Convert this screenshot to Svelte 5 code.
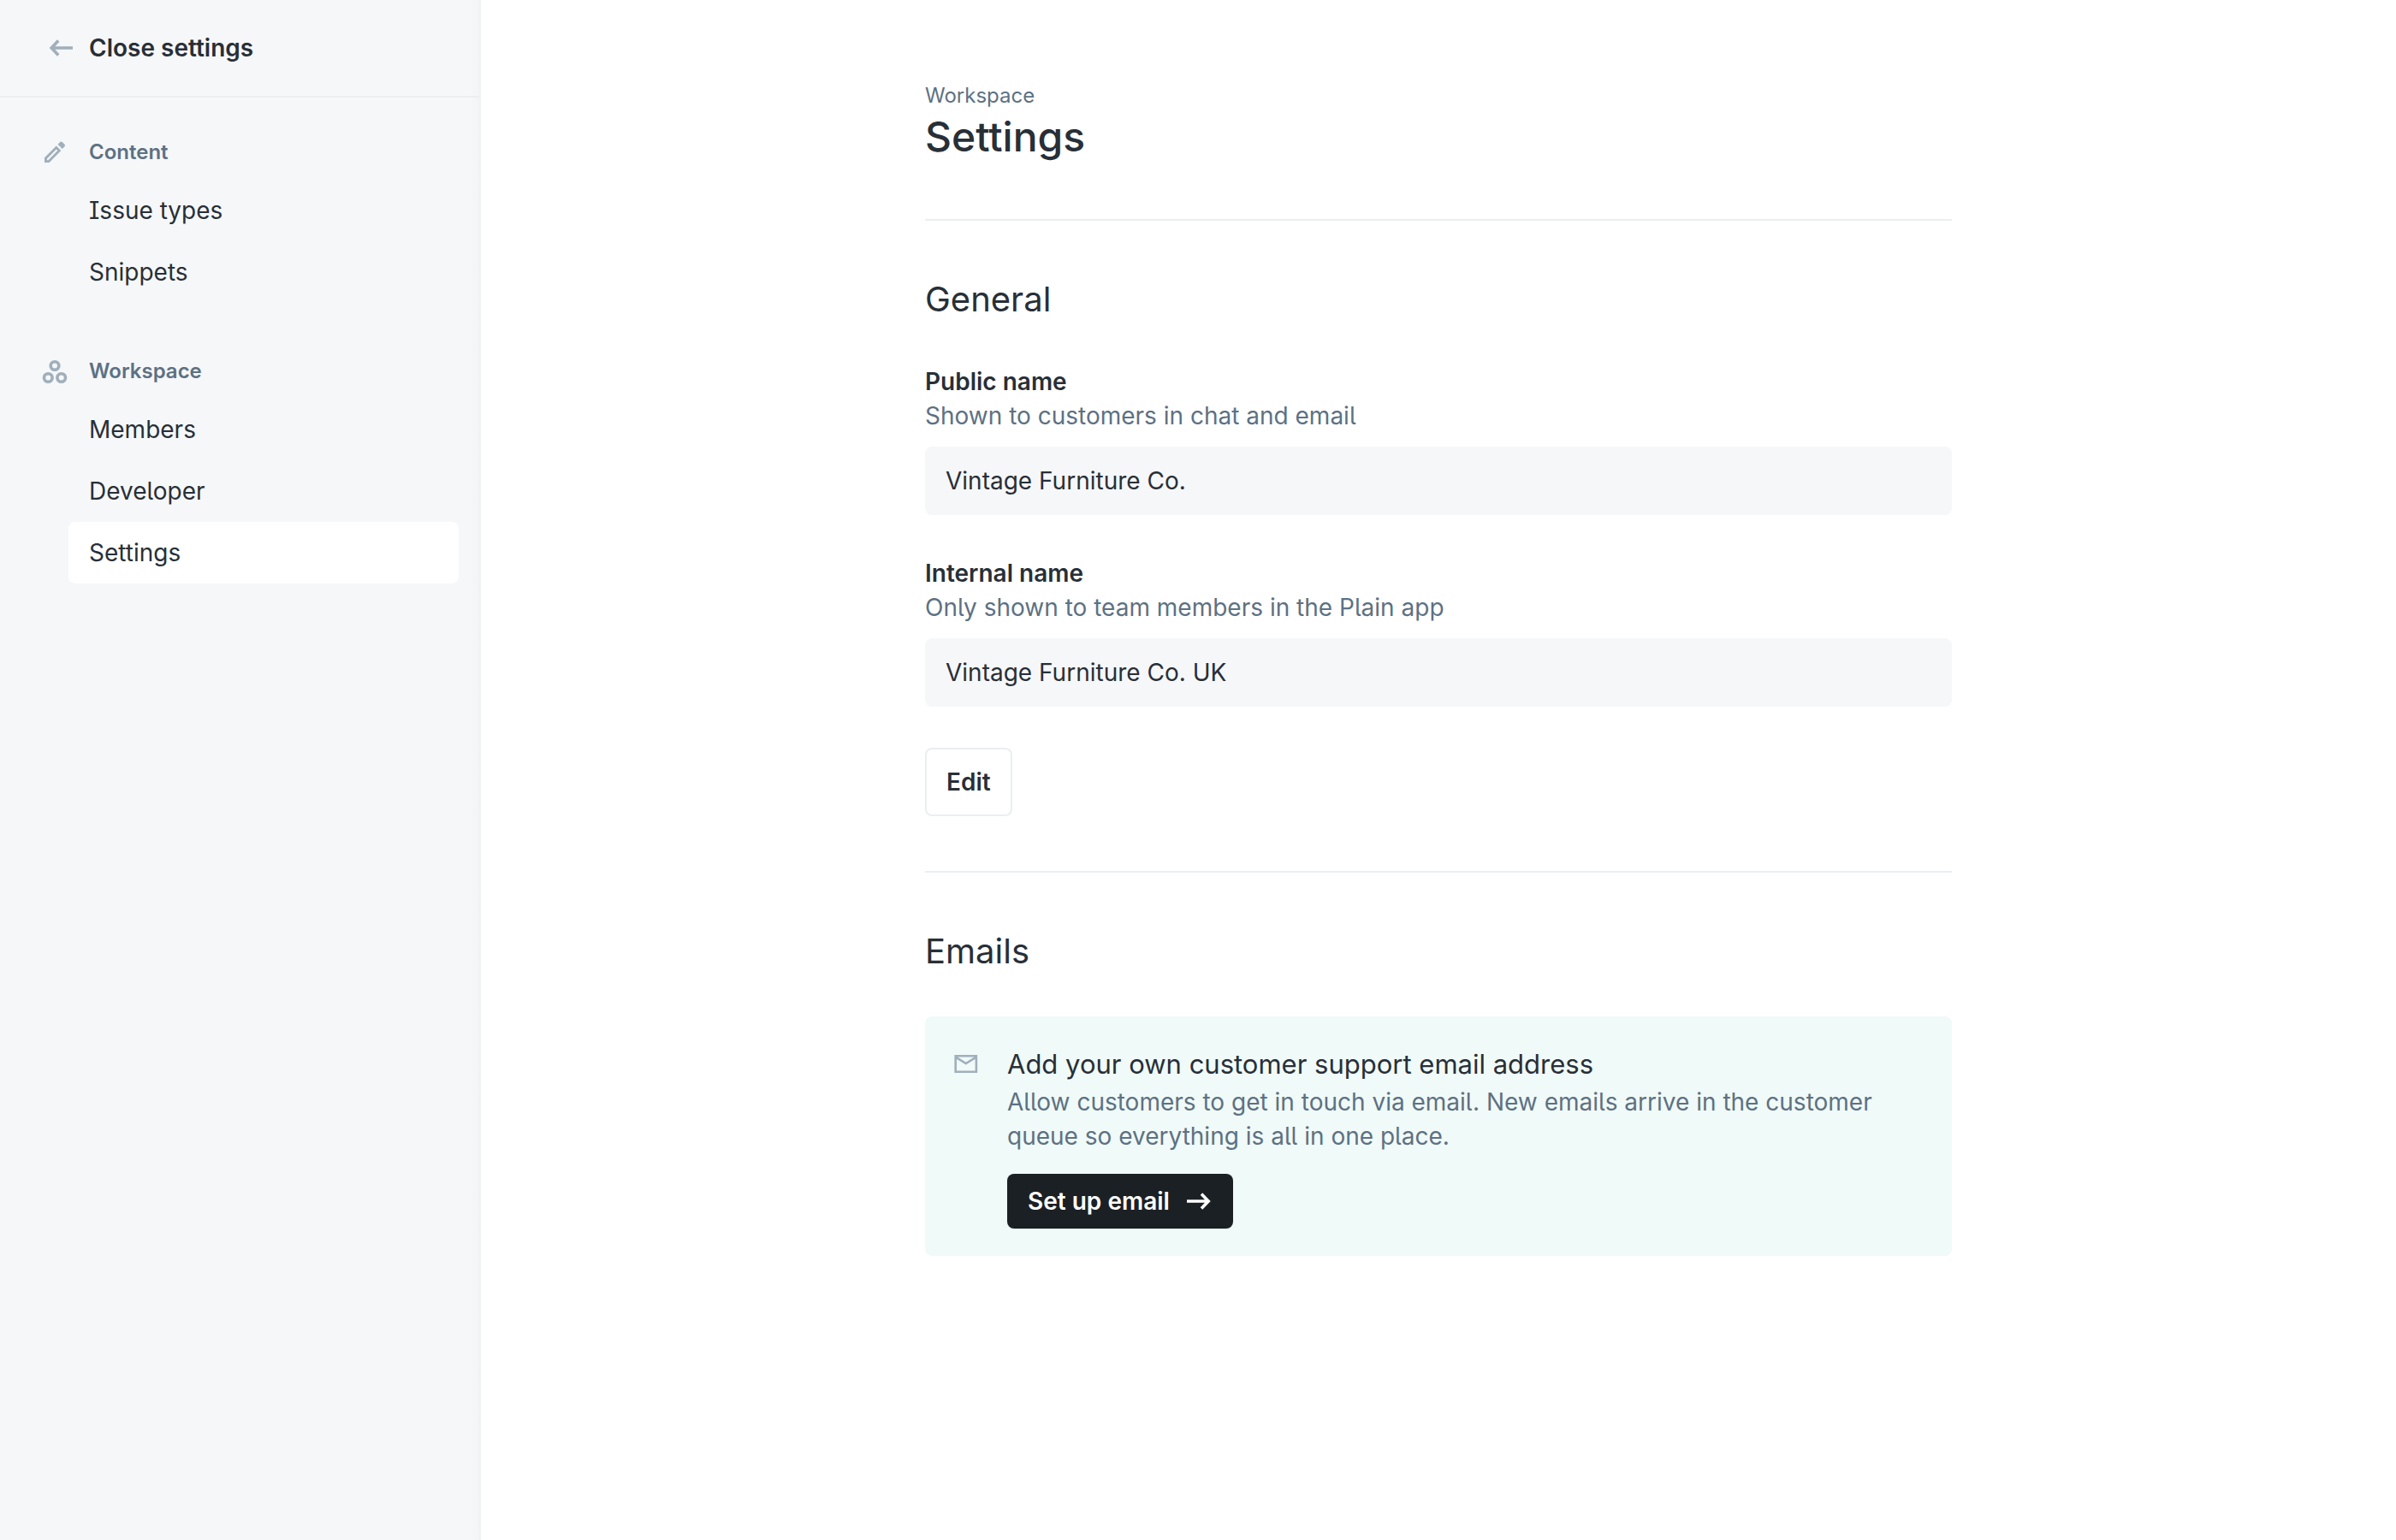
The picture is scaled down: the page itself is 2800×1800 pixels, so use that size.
<script>
  const groups = [
    { title: 'Content', icon: 'pencil', items: ['Issue types', 'Snippets'] },
    { title: 'Workspace', icon: 'circles', items: ['Members', 'Developer', 'Settings'] }
  ];
  const current = 'Settings';

  let publicName = $state('Vintage Furniture Co.');
  let internalName = $state('Vintage Furniture Co. UK');
</script>

<div class="page">
  <aside class="sidebar">
    <a class="close" href="#close">
      <svg class="icon" viewBox="0 0 32 32" aria-hidden="true">
        <path d="M29 16H4M12.200 7.600 4.200 16l8 8.400" />
      </svg>
      Close settings
    </a>
    <nav class="nav" aria-label="Settings">
      {#each groups as group}
        <section class="group">
          <h2 class="group-title">
            {#if group.icon === 'pencil'}
              <svg class="icon solid" viewBox="0 0 32 32" aria-hidden="true">
                <path fill-rule="evenodd" d="M4 28v-5.700L17.800 8.400l5.500 5.500L9.600 28zM7 25.200h1.300L19.300 14l-1.500-1.400L7 23.600z" />
                <path d="M19.500 6.800 22.300 4.100q1.200-1 2.500 0l2.700 2.700q1.200 1.300 0 2.500L24.800 12z" />
              </svg>
            {:else}
              <svg class="icon" viewBox="0 0 32 32" aria-hidden="true">
                <circle cx="16" cy="9.500" r="4.800" />
                <circle cx="8.300" cy="23.500" r="4.800" />
                <circle cx="23.700" cy="23.500" r="4.800" />
              </svg>
            {/if}
            {group.title}
          </h2>
          <ul class="items">
            {#each group.items as item}
              <li>
                <a class="item" class:active={item === current} href="#{item.toLowerCase().replace(' ', '-')}" aria-current={item === current ? 'page' : undefined}>{item}</a>
              </li>
            {/each}
          </ul>
        </section>
      {/each}
    </nav>
  </aside>

  <main class="main">
    <div class="content">
      <header class="head">
        <p class="eyebrow">Workspace</p>
        <h1 class="title">Settings</h1>
      </header>

      <section class="section general">
        <h2 class="section-title">General</h2>
        <div class="field">
          <label class="label" for="public-name">Public name</label>
          <p class="hint" id="public-hint">Shown to customers in chat and email</p>
          <input class="input" id="public-name" type="text" aria-describedby="public-hint" readonly bind:value={publicName} />
        </div>
        <div class="field">
          <label class="label" for="internal-name">Internal name</label>
          <p class="hint" id="internal-hint">Only shown to team members in the Plain app</p>
          <input class="input" id="internal-name" type="text" aria-describedby="internal-hint" readonly bind:value={internalName} />
        </div>
        <button class="edit" type="button">Edit</button>
      </section>

      <section class="section">
        <h2 class="section-title">Emails</h2>
        <div class="card">
          <svg class="icon mail" viewBox="0 0 32 32" aria-hidden="true">
            <path d="M3.700 6.300h24.200v18.500H3.700zM4.200 7.800l11.600 7.200 11.600-7.200" />
          </svg>
          <div class="card-body">
            <h3 class="card-title">Add your own customer support email address</h3>
            <p class="hint">Allow customers to get in touch via email. New emails arrive in the customer queue so everything is all in one place.</p>
            <button class="setup" type="button">
              Set up email
              <svg class="icon" viewBox="0 0 32 32" aria-hidden="true">
                <path d="M2 16h26M19 7.600 27.200 16 19 24.400" />
              </svg>
            </button>
          </div>
        </div>
      </section>
    </div>
  </main>
</div>

<style>
  :global(body) {
    margin: 0;
  }

  .page {
    display: flex;
    min-height: 100vh;
    background: #fff;
    color: #282f37;
    font-family: Inter, 'Liberation Sans', sans-serif;
    font-size: 28px;
    line-height: 40px;
    font-feature-settings: 'cv05', 'cv08';
  }

  h1, h2, h3, p, ul {
    margin: 0;
    padding: 0;
    font-weight: 400;
  }

  ul {
    list-style: none;
  }

  a {
    color: inherit;
    text-decoration: none;
  }

  .icon {
    flex: none;
    width: 32px;
    height: 32px;
    fill: none;
    stroke: currentColor;
    stroke-width: 3.6;
  }

  .solid {
    fill: currentColor;
    stroke: none;
  }

  .sidebar {
    flex: none;
    box-sizing: border-box;
    width: 562px;
    border-right: 2px solid #eff1f3;
    background: linear-gradient(to left, #f2f4f6, #f6f7f9 10px);
  }

  .close {
    display: flex;
    align-items: center;
    gap: 16px;
    height: 112px;
    padding-left: 56px;
    border-bottom: 2px solid #eceef0;
    font-weight: 600;
    font-feature-settings: normal;
  }

  .sidebar .icon {
    color: #a0afbb;
  }

  .nav {
    display: flex;
    flex-direction: column;
    gap: 64px;
    padding: 48px 24px 48px 48px;
  }

  .group-title {
    display: flex;
    align-items: center;
    gap: 24px;
    height: 32px;
    margin-bottom: 16px;
    color: #5d7183;
    font-size: 24px;
    font-weight: 600;
    font-feature-settings: normal;
  }

  .items {
    padding-left: 32px;
  }

  .item {
    display: block;
    padding: 16px 24px;
    border-radius: 8px;
  }

  .active {
    background: #fff;
  }

  .main {
    flex: 1;
    padding: 96px 48px;
  }

  .content {
    max-width: 1200px;
    margin: 0 auto;
  }

  .head {
    padding-bottom: 64px;
  }

  .eyebrow {
    color: #5d7183;
    font-size: 24px;
    line-height: 32px;
  }

  .title,
  .section-title,
  .card-title {
    font-feature-settings: normal;
  }

  .title {
    font-size: 48px;
    font-weight: 500;
    line-height: 64px;
  }

  .section {
    padding-top: 64px;
    border-top: 2px solid #ebeef1;
  }

  .general {
    padding-bottom: 64px;
  }

  .section-title {
    margin-bottom: 48px;
    font-size: 40px;
    line-height: 56px;
  }

  .field {
    margin-bottom: 48px;
  }

  .label {
    display: block;
    font-weight: 600;
    font-feature-settings: normal;
  }

  .hint {
    color: #5d7183;
  }

  .input {
    display: block;
    box-sizing: border-box;
    width: 100%;
    height: 80px;
    margin-top: 16px;
    padding: 0 24px;
    border: 0;
    border-radius: 8px;
    background: #f6f7f9;
    color: inherit;
    font: inherit;
  }

  .edit,
  .setup {
    font: inherit;
    font-weight: 600;
    font-feature-settings: normal;
    border-radius: 8px;
  }

  .edit {
    height: 80px;
    padding: 0 23px;
    border: 2px solid #ebeef1;
    background: #fff;
    color: inherit;
  }

  .card {
    display: flex;
    gap: 32px;
    padding: 32px;
    border-radius: 8px;
    background: #f0faf8;
  }

  .mail {
    margin-top: 8px;
    color: #a0afbb;
    stroke-width: 2.6;
  }

  .card-body {
    flex: 1;
  }

  .card-title {
    font-size: 31px;
    line-height: 48px;
  }

  .setup {
    display: flex;
    align-items: center;
    gap: 18px;
    height: 64px;
    margin-top: 24px;
    padding: 0 24px;
    border: 0;
    background: #1b2024;
    color: #fff;
  }
</style>
